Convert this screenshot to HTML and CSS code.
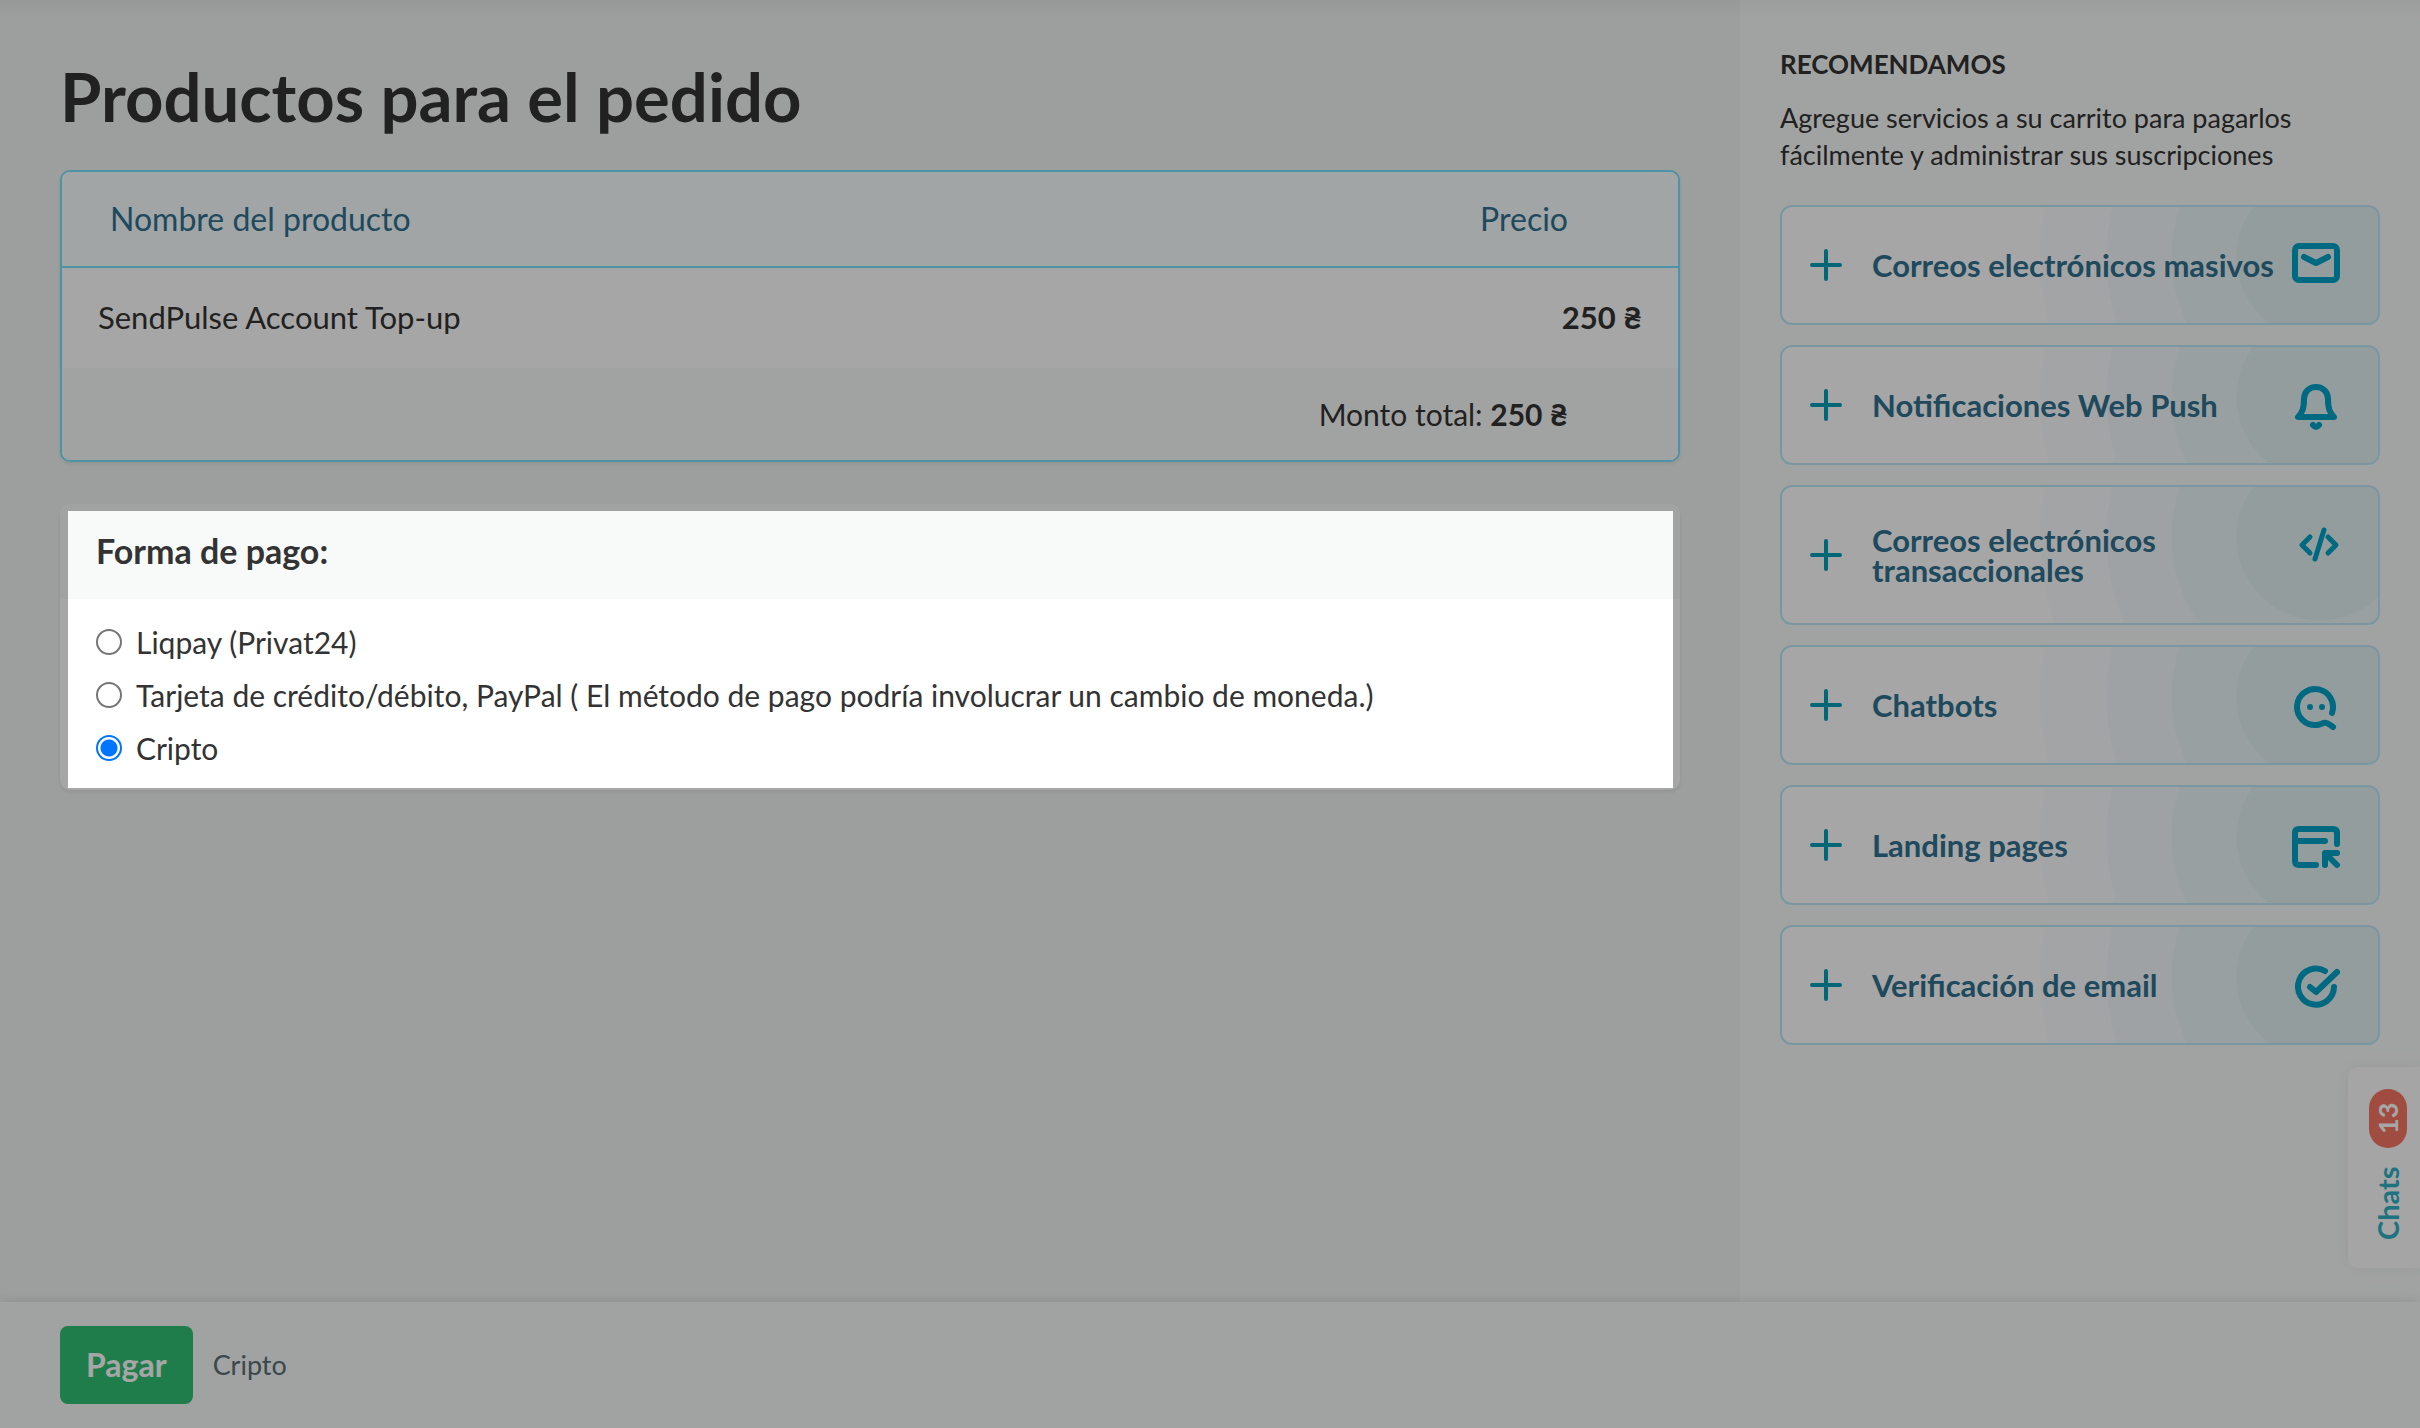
FILE: index.html
```html
<!DOCTYPE html>
<html lang="es">
<head>
<meta charset="utf-8">
<title>Productos para el pedido</title>
<link rel="stylesheet" href="styles.css">
</head>
<body>
<div class="page">
  <div class="content">
    <main class="main">
      <h1 class="title">Productos para el pedido</h1>
      <section class="order">
        <table class="order-table">
          <thead>
            <tr><th scope="col">Nombre del producto</th><th scope="col" class="num">Precio</th></tr>
          </thead>
          <tbody>
            <tr><td>SendPulse Account Top-up</td><td class="num"><b>250 ₴</b></td></tr>
          </tbody>
          <tfoot>
            <tr><td colspan="2" class="num">Monto total: <b>250 ₴</b></td></tr>
          </tfoot>
        </table>
      </section>
      <section class="payment">
        <h2 class="payment-title" id="payment-title">Forma de pago:</h2>
        <div class="payment-options" role="radiogroup" aria-labelledby="payment-title">
          <label class="option"><input type="radio" name="method">Liqpay (Privat24)</label>
          <label class="option"><input type="radio" name="method">Tarjeta de crédito/débito, PayPal ( El método de pago podría involucrar un cambio de moneda.)</label>
          <label class="option"><input type="radio" name="method" checked>Cripto</label>
        </div>
        <div class="spotlight"></div>
      </section>
    </main>
    <aside class="side">
      <h3 class="side-title">RECOMENDAMOS</h3>
      <p class="side-text">Agregue servicios a su carrito para pagarlos fácilmente y administrar sus suscripciones</p>
      <div class="services">
        <button class="service" type="button">
          <svg class="plus" viewBox="0 0 32 32"><path d="M16 2v28M2 16h28"/></svg>
          <span class="service-name">Correos electrónicos masivos</span>
          <svg class="icon" viewBox="0 0 52 52"><rect x="5" y="7" width="42" height="34" rx="4"/><path d="M14 18l12 6 12-6"/></svg>
        </button>
        <button class="service" type="button">
          <svg class="plus" viewBox="0 0 32 32"><path d="M16 2v28M2 16h28"/></svg>
          <span class="service-name">Notificaciones Web Push</span>
          <svg class="icon" viewBox="0 0 52 52"><path d="M8 38h36c-4-4-6-8-6-18 0-7-5-12-12-12s-12 5-12 12c0 10-2 14-6 18z"/><path d="M23 46q3 4 6 0"/></svg>
        </button>
        <button class="service" type="button">
          <svg class="plus" viewBox="0 0 32 32"><path d="M16 2v28M2 16h28"/></svg>
          <span class="service-name">Correos electrónicos transaccionales</span>
          <svg class="icon thin" viewBox="0 0 52 52"><path d="M20 18l-8 8 8 8M38 18l8 8-8 8M34 11l-9 29"/></svg>
        </button>
        <button class="service" type="button">
          <svg class="plus" viewBox="0 0 32 32"><path d="M16 2v28M2 16h28"/></svg>
          <span class="service-name">Chatbots</span>
          <svg class="icon" viewBox="0 0 52 52"><path d="M42 34A18 18 0 1 0 26 46c5 0 7-3 10-2 2 0 4 2 7 4"/><circle class="dot" cx="20" cy="28" r="3"/><circle class="dot" cx="32" cy="28" r="3"/></svg>
        </button>
        <button class="service" type="button">
          <svg class="plus" viewBox="0 0 32 32"><path d="M16 2v28M2 16h28"/></svg>
          <span class="service-name">Landing pages</span>
          <svg class="icon" viewBox="0 0 52 52"><path d="M26 46H9q-4 0-4-4V14q0-4 4-4h34q4 0 4 4v11M5 22h30M47 46L36 35M47 34H35v12"/></svg>
        </button>
        <button class="service" type="button">
          <svg class="plus" viewBox="0 0 32 32"><path d="M16 2v28M2 16h28"/></svg>
          <span class="service-name">Verificación de email</span>
          <svg class="icon" viewBox="0 0 52 52"><path d="M35 12A18 18 0 1 0 44 28M20 28l6 5 21-20"/></svg>
        </button>
      </div>
    </aside>
  </div>
  <footer class="footer">
    <button class="pay" type="button">Pagar</button>
    <span class="method">Cripto</span>
  </footer>
  <a class="chats" href="#chats"><span>Chats</span><span class="badge">13</span></a>
</div>
</body>
</html>
```
FILE: styles.css
```css
* { box-sizing: border-box; }
body {
  margin: 0;
  font-family: Lato, "Open Sans", sans-serif;
  font-size: 30px;
  line-height: 40px;
  color: #333;
}
h1, h2, h3, p { margin: 0; }
.page {
  position: relative;
  min-height: 100vh;
  display: flex;
  flex-direction: column;
  overflow: hidden;
  background: #f2f5f3;
}
.page::before {
  content: "";
  position: absolute;
  inset: 0 0 auto;
  height: 20px;
  background: linear-gradient(rgba(0, 0, 0, .04), transparent);
}
.content { flex: 1; display: flex; }
.main { flex: 1; padding: 60px; }
.title { font-size: 67px; line-height: 72px; margin-bottom: 38px; }

.order {
  border: 2px solid #75e2ff;
  border-radius: 10px;
  overflow: hidden;
  background: #fff;
  margin-bottom: 42px;
  box-shadow: 0 2px 4px rgba(0, 0, 0, .08);
}
.order-table { width: 100%; border-collapse: separate; border-spacing: 0; }
.order-table th {
  height: 96px;
  padding: 0 48px;
  font-size: 32px;
  font-weight: 400;
  text-align: left;
  color: #31708f;
  background: #f7fdff;
  border-bottom: 2px solid #75e2ff;
}
.order-table td { height: 100px; padding: 0 36px; }
.order-table tbody td { font-size: 31px; padding-bottom: 2px; }
.order-table tfoot td { height: 92px; background: #f8faf9; padding-right: 110px; }
.order-table .num { text-align: right; }
.order-table th.num { padding-right: 110px; }

.payment {
  position: relative;
  background: #fff;
  border-radius: 10px;
  box-shadow: 0 2px 4px rgba(0, 0, 0, .08);
}
.payment-title {
  padding: 27px 36px 28px;
  font-size: 34px;
  line-height: 40px;
  background: #f8faf9;
  border-radius: 10px 10px 0 0;
}
.payment-options { padding: 16px 36px; }
.option { display: flex; align-items: center; gap: 14px; height: 53px; }
.option input {
  appearance: none;
  width: 26px;
  height: 26px;
  margin: 0;
  border: 2px solid #767676;
  border-radius: 50%;
  background: #fff;
}
.option input:checked {
  border-color: #0075ff;
  background: radial-gradient(circle, #0075ff 8px, #fff 9px);
}
/* Dims everything outside the payment block */
.spotlight {
  position: absolute;
  inset: 7px 7px 2px 8px;
  z-index: 10;
  box-shadow: 0 0 0 3000px rgba(0, 0, 0, .35);
  pointer-events: none;
}

.side { width: 680px; padding: 46px 40px 40px; background: #f8faf9; }
.side-title { font-size: 26px; line-height: 36px; margin-bottom: 17px; }
.side-text { font-size: 27px; line-height: 37px; margin-bottom: 32px; }
.services { display: grid; gap: 20px; }
.service {
  display: flex;
  align-items: center;
  min-height: 120px;
  padding: 32px 36px 32px 28px;
  border: 2px solid #bce8f8;
  border-radius: 12px;
  font: inherit;
  font-size: 31px;
  font-weight: 700;
  line-height: 30px;
  text-align: left;
  color: #31708f;
  background: radial-gradient(circle at calc(100% - 58px) 50px, #e2f1f2 83px, #ecf6f7 84px 148px, #f4f9fc 149px 213px, #fafcfe 214px 279px, #fff 280px);
}
.service-name { flex: 1; padding: 6px 0 6px 30px; }
.plus { flex: none; width: 32px; fill: none; stroke: #009fb5; stroke-width: 4; stroke-linecap: round; }
.icon { flex: none; align-self: flex-start; width: 52px; fill: none; stroke: #00a2c8; stroke-width: 6; stroke-linecap: round; stroke-linejoin: round; }
.icon.thin { stroke-width: 5; }
.icon .dot { fill: #00a2c8; stroke: none; }

.footer {
  position: relative;
  display: flex;
  align-items: center;
  gap: 20px;
  padding: 24px 60px;
  min-height: 126px;
  background: #f8faf9;
  box-shadow: 0 0 12px rgba(0, 0, 0, .12);
}
.pay {
  height: 78px;
  padding: 0 26px;
  border: 0;
  border-radius: 8px;
  font: inherit;
  font-size: 32px;
  font-weight: 700;
  color: #fff;
  background: #31c073;
}
.method { font-size: 27px; color: #5b6f73; }
.chats {
  position: absolute;
  right: 0;
  bottom: 160px;
  width: 72px;
  height: 201px;
  padding: 28px 8px 22px 0;
  display: flex;
  align-items: center;
  justify-content: space-between;
  writing-mode: vertical-rl;
  transform: rotate(180deg);
  border-radius: 0 10px 10px 0;
  background: #fcfdfc;
  color: #30b1c5;
  font-size: 29px;
  line-height: 38px;
  font-weight: 700;
  text-decoration: none;
  box-shadow: 0 0 20px rgba(0, 0, 0, .06);
}
.badge { padding: 14px 0; border-radius: 20px; background: #f67563; color: #fff; font-size: 27px; }
```
